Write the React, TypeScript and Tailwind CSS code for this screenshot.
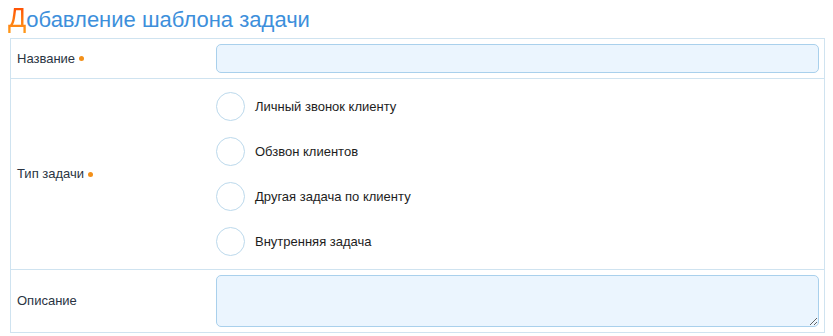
import { useState } from 'react';

const taskTypes = [
  'Личный звонок клиенту',
  'Обзвон клиентов',
  'Другая задача по клиенту',
  'Внутренняя задача',
];

function Required() {
  return <span className="ml-[4px] inline-block h-[5px] w-[5px] rounded-full bg-[#f39019] align-middle" />;
}

export default function App() {
  const [name, setName] = useState('');
  const [type, setType] = useState<string | null>(null);
  const [description, setDescription] = useState('');

  return (
    <div className="bg-white font-['Liberation_Sans',Arial,sans-serif] text-[13px] text-[#2a3442]">
      {/* Title */}
      <h1 className="h-[38px] pl-[8px] pt-[3px] text-[22px] leading-[30px] font-normal text-[#3d8fdb]">
        <span className="bg-gradient-to-b from-[#ff3d00] to-[#ff9a1a] bg-clip-text text-[27px] text-transparent">Д</span>
        обавление шаблона задачи
      </h1>

      <div className="ml-[10px] w-[815px] border border-[#cfe3f0]">
        {/* Название */}
        <div className="grid grid-cols-[200px_1fr] border-b border-[#cfe3f0]">
          <div className="flex items-center pl-[6px]">
            Название
            <Required />
          </div>
          <div className="py-[5px] pl-[5px] pr-[5px]">
            <input
              value={name}
              onChange={(e) => setName(e.target.value)}
              className="block h-[29px] w-full rounded-[5px] border border-[#a9d0ec] bg-[#ebf5fe] px-2 outline-none"
            />
          </div>
        </div>

        {/* Тип задачи */}
        <div className="grid grid-cols-[200px_1fr] border-b border-[#cfe3f0]">
          <div className="flex items-center pl-[6px]">
            Тип задачи
            <Required />
          </div>
          <div className="flex flex-col gap-[16px] py-[13px] pl-[5px]">
            {taskTypes.map((t) => (
              <label key={t} className="flex cursor-pointer items-center gap-[10px]">
                <span
                  onClick={() => setType(t)}
                  className="flex h-[29px] w-[29px] items-center justify-center rounded-full border border-[#bcd9ec] bg-white"
                >
                  {type === t && <span className="h-[13px] w-[13px] rounded-full bg-[#3d8fdb]" />}
                </span>
                <span className="text-[#1d1d1d]" onClick={() => setType(t)}>
                  {t}
                </span>
              </label>
            ))}
          </div>
        </div>

        {/* Описание */}
        <div className="grid grid-cols-[200px_1fr]">
          <div className="flex items-center pl-[6px]">Описание</div>
          <div className="py-[5px] pl-[5px] pr-[5px]">
            <textarea
              value={description}
              onChange={(e) => setDescription(e.target.value)}
              className="block h-[52px] w-full rounded-[5px] border border-[#a9d0ec] bg-[#ebf5fe] px-2 py-1 outline-none"
            />
          </div>
        </div>
      </div>
    </div>
  );
}
